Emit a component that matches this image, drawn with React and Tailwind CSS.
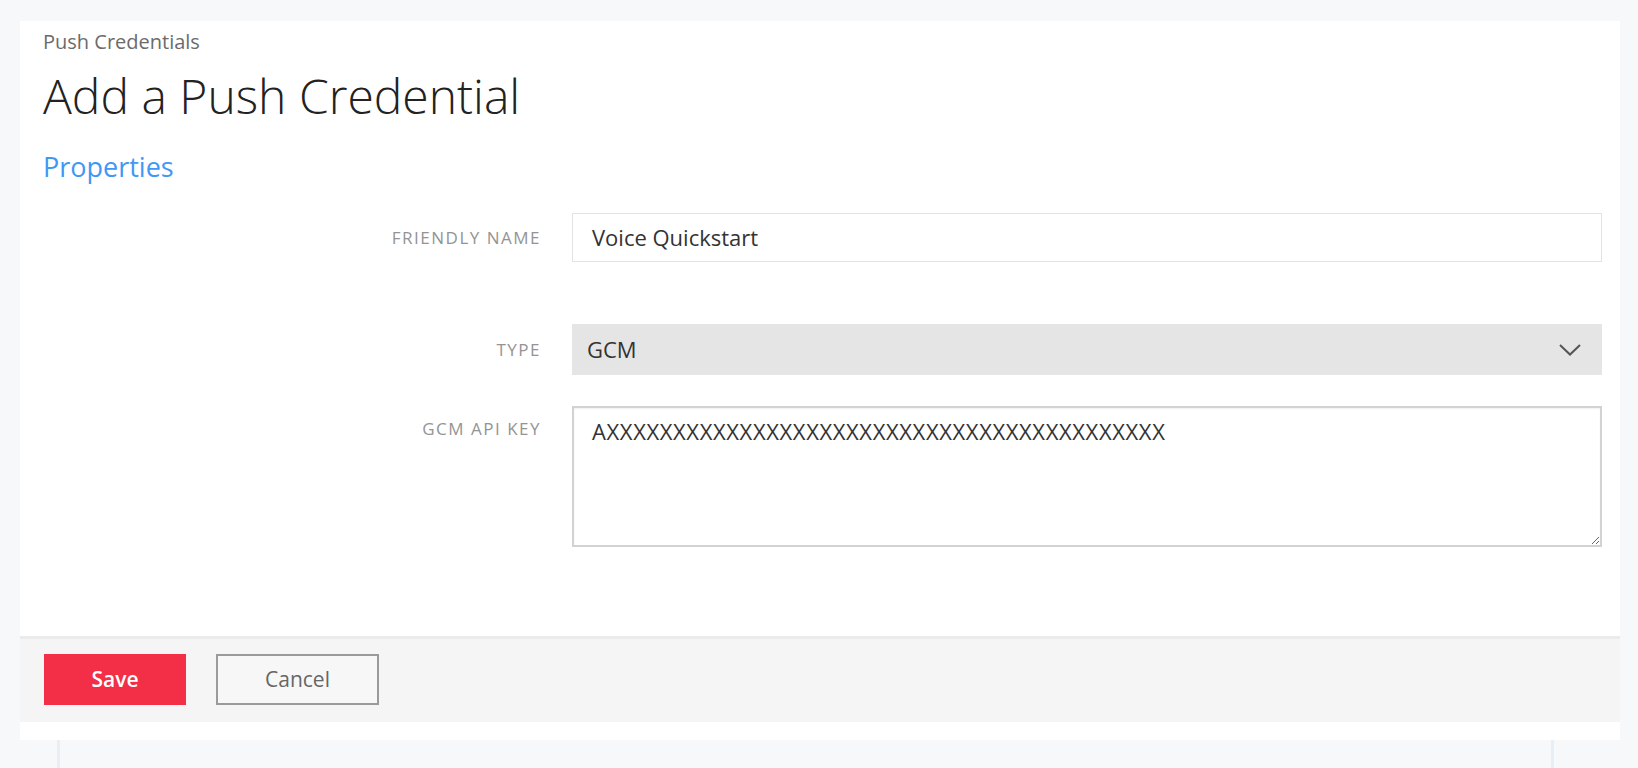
import React from "react";

const font = { fontFamily: '"Open Sans", "Liberation Sans", sans-serif' };

function Label({ children, className = "" }) {
  return (
    <div
      className={`w-[498px] shrink-0 text-right text-[17px] leading-[24px] tracking-[1.5px] uppercase text-[#949494] ${className}`}
    >
      {children}
    </div>
  );
}

export default function App() {
  const key = "A" + "X".repeat(42);
  return (
    <div className="min-h-[768px] w-full bg-[#f6f8fa] pt-[21px]" style={font}>
      <div className="ml-[20px] w-[1600px] bg-white">
        <div className="pl-[23px] pr-[18px] pt-[9px]">
          <div className="text-[20px] leading-[24px] text-[#6b6b6b]">Push Credentials</div>
          <h1 className="mt-[14px] text-[48px] leading-[56px] font-light text-[#222]">
            Add a Push Credential
          </h1>
          <h2 className="mt-[27px] text-[27px] leading-[32px] text-[#3f98f5]">Properties</h2>

          <div className="mt-[30px] flex items-center gap-[31px]">
            <Label>Friendly Name</Label>
            <div className="flex h-[49px] flex-1 items-center border border-[#e3e3e3] px-[19px] text-[22px] text-[#333]">
              Voice Quickstart
            </div>
          </div>

          <div className="mt-[62px] flex items-center gap-[31px]">
            <Label>Type</Label>
            <div className="flex h-[51px] flex-1 items-center justify-between bg-[#e5e5e5] pl-[15px] pr-[21px] text-[22px] text-[#333]">
              <span>GCM</span>
              <svg width="22" height="12" viewBox="0 0 22 12" fill="none">
                <polyline points="1,1 11,10.5 21,1" stroke="#555" strokeWidth="2" />
              </svg>
            </div>
          </div>

          <div className="mt-[31px] flex items-start gap-[31px]">
            <Label className="mt-[11px]">GCM API Key</Label>
            <textarea
              readOnly
              defaultValue={key}
              className="h-[141px] flex-1 resize-y border-2 border-[#d2d2d2] px-[18px] pt-[8px] text-[22px] leading-[30px] tracking-[0.6px] text-[#333] shadow-[inset_0_1px_2px_rgba(0,0,0,0.06)] outline-none"
              style={font}
            />
          </div>
        </div>

        <div className="mt-[89px] flex gap-[30px] border-t-[3px] border-[#ebebeb] bg-[#f5f5f5] pl-[24px] pt-[15px] pb-[17px]">
          <button className="flex h-[51px] w-[142px] items-center justify-center bg-[#f22f46] text-[21px] font-semibold text-white">
            Save
          </button>
          <button className="flex h-[51px] w-[163px] items-center justify-center border-2 border-[#9a9a9a] bg-[#f7f7f7] text-[21px] text-[#666]">
            Cancel
          </button>
        </div>
        <div className="h-[18px] bg-white" />
      </div>
      <div className="ml-[57px] h-[29px] w-[1497px] border-x-[3px] border-[#e8eef6]" />
    </div>
  );
}
